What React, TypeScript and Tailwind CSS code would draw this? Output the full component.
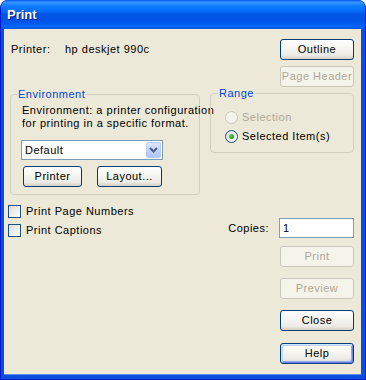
import React from "react";

// XP-style button
function XpButton({
  label,
  disabled,
  isDefault,
  className = "",
}: {
  label: string;
  disabled?: boolean;
  isDefault?: boolean;
  className?: string;
}) {
  if (disabled) {
    return (
      <button
        disabled
        className={`h-[21px] rounded-[3px] border border-[#C9C7BA] bg-[#F5F4EA] text-[#ACA899] text-[11px] leading-[13px] tracking-[0.5px] whitespace-nowrap ${className}`}
      >
        {label}
      </button>
    );
  }
  return (
    <button
      className={`h-[21px] rounded-[3px] border border-[#003C74] bg-[linear-gradient(to_bottom,#FFFFFF_0%,#F6F6F2_40%,#ECEBE6_80%,#D6D0C5_100%)] text-black text-[11px] leading-[13px] tracking-[0.5px] whitespace-nowrap ${
        isDefault
          ? "shadow-[inset_1px_1px_0_0_#CEE7FF,inset_-1px_-1px_0_0_#6982EE,inset_2px_2px_0_0_#BCD4F6,inset_-2px_-2px_0_0_#89ADE4]"
          : ""
      } ${className}`}
    >
      {label}
    </button>
  );
}

function Radio({ checked, disabled }: { checked?: boolean; disabled?: boolean }) {
  return (
    <span
      className={`w-[13px] h-[13px] rounded-full border flex items-center justify-center shrink-0 ${
        disabled
          ? "border-[#CAC8BB] bg-[#F5F4EA]"
          : "border-[#1C5180] bg-[linear-gradient(135deg,#DCDCD7_0%,#FFFFFF_100%)]"
      }`}
    >
      {checked && (
        <span className="w-[5px] h-[5px] rounded-full bg-[radial-gradient(circle_at_35%_35%,#55D551_0%,#21A121_70%,#1A8A1A_100%)]" />
      )}
    </span>
  );
}

function Checkbox() {
  return (
    <span className="w-[13px] h-[13px] border border-[#1C5180] bg-[linear-gradient(135deg,#DCDCD7_0%,#FFFFFF_100%)] shrink-0" />
  );
}

export default function App() {
  return (
    <div className="w-[366px] h-[380px] flex flex-col rounded-t-[8px] overflow-hidden bg-[#0A4FDB] border-x border-b border-[#0019CF] font-['Liberation_Sans',Arial,sans-serif] text-[11px] leading-[13px] tracking-[0.5px] text-black select-none">
      {/* Title bar */}
      <div className="h-[29px] shrink-0 flex items-center pl-[6px] bg-[linear-gradient(to_bottom,#0058EE_0%,#3A93FF_8%,#288EFF_12%,#127DFF_20%,#036FFC_36%,#0262EE_44%,#0057E5_48%,#0054E3_60%,#0055EB_76%,#005BF5_84%,#026AFE_92%,#0062EF_94%,#0052D6_100%)]">
        <span className="text-white font-bold text-[13px] tracking-normal [text-shadow:1px_1px_0_#0F1089]">
          Print
        </span>
      </div>

      {/* Content */}
      <div className="flex-1 ml-[3px] mr-[4px] mb-[4px] bg-[#ECE9D8] border-b border-[#5C8BF0] flex gap-[10px] pl-[4px] pr-[7px] pt-[10px]">
        {/* Left column */}
        <div className="w-[192px] flex flex-col">
          <div className="mt-[4px] h-[13px] flex">
            <span className="ml-[3px] w-[54px]">Printer:</span>
            <span>hp deskjet 990c</span>
          </div>

          <fieldset className="mt-[32px] ml-[2px] w-[190px] min-w-0 border border-[#D0D0BF] rounded-[4px] pl-[11px] pb-[7px]">
            <legend className="-ml-[5px] px-[1px] text-[#0046D5] leading-[13px]">
              Environment
            </legend>
            <p className="mt-[3px] leading-[13px] whitespace-nowrap">
              Environment: a printer configuration
              <br />
              for printing in a specific format.
            </p>
            <div className="mt-[10px] -ml-[1px] w-[142px] h-[20px] border border-[#7F9DB9] bg-white flex items-center justify-between">
              <span className="pl-[3px]">Default</span>
              <span className="w-[15px] h-[16px] mr-[1px] rounded-[2px] border border-[#B9CDF6] bg-[linear-gradient(to_bottom,#DCE6FD_0%,#C1D3FB_50%,#B0C5F7_100%)] flex items-center justify-center">
                <svg width="9" height="6" viewBox="0 0 9 6">
                  <path
                    d="M1 1 L4.5 4.5 L8 1"
                    fill="none"
                    stroke="#4D6185"
                    strokeWidth="2"
                  />
                </svg>
              </span>
            </div>
            <div className="mt-[6px] ml-[1px] flex gap-[15px]">
              <XpButton label="Printer" className="w-[59px]" />
              <XpButton label="Layout..." className="w-[65px]" />
            </div>
          </fieldset>

          <div className="mt-[10px] h-[13px] flex items-center gap-[5px]">
            <Checkbox />
            <span>Print Page Numbers</span>
          </div>
          <div className="mt-[6px] h-[13px] flex items-center gap-[5px]">
            <Checkbox />
            <span>Print Captions</span>
          </div>
        </div>

        {/* Right column */}
        <div className="w-[144px] flex flex-col items-end">
          <XpButton label="Outline" className="w-[74px]" />
          <XpButton label="Page Header" disabled className="w-[74px] mt-[6px]" />

          <fieldset className="self-stretch min-w-0 border border-[#D0D0BF] rounded-[4px] pl-[14px] pt-[11px] pb-[9px]">
            <legend className="-ml-[7px] px-[1px] text-[#0046D5] leading-[13px]">
              Range
            </legend>
            <div className="h-[13px] flex items-center gap-[4px]">
              <Radio disabled />
              <span className="text-[#ACA899]">Selection</span>
            </div>
            <div className="mt-[6px] h-[13px] flex items-center gap-[4px]">
              <Radio checked />
              <span>Selected Item(s)</span>
            </div>
          </fieldset>

          <div className="mt-[65px] flex items-center gap-[10px]">
            <span>Copies:</span>
            <div className="w-[75px] h-[20px] border border-[#7F9DB9] bg-white flex items-center pl-[3px]">
              1
            </div>
          </div>

          <XpButton label="Print" disabled className="w-[74px] mt-[8px]" />
          <XpButton label="Preview" disabled className="w-[74px] mt-[11px]" />
          <XpButton label="Close" className="w-[74px] mt-[11px]" />
          <XpButton label="Help" isDefault className="w-[74px] mt-[12px]" />
        </div>
      </div>
    </div>
  );
}
